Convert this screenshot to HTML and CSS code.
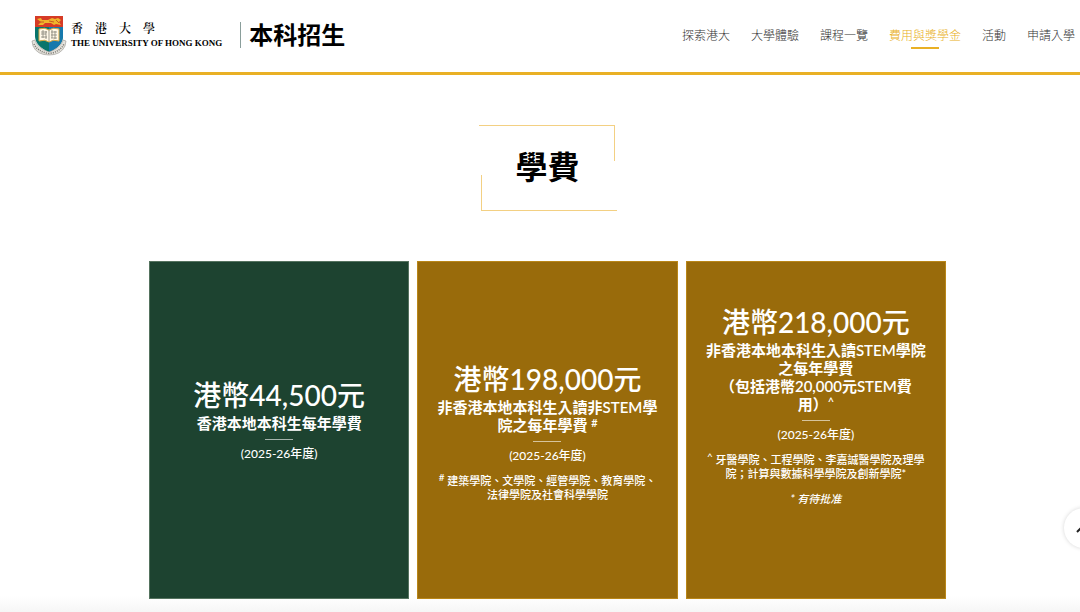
FILE: index.html
```html
<!DOCTYPE html>
<html lang="zh-Hant">
<head>
<meta charset="utf-8">
<meta name="viewport" content="width=device-width, initial-scale=1">
<title>學費 - 香港大學本科招生</title>
<link rel="stylesheet" href="styles.css">
</head>
<body>
<header class="site-header">
  <a class="brand" href="#">
    <svg class="crest" viewBox="0 0 36 42" aria-hidden="true">
      <path d="M4 2H32V22Q32 32 18 38Q4 32 4 22Z" fill="#08756c"/>
      <path d="M18 13H32V22Q32 32 18 38Z" fill="#1679ad"/>
      <path d="M4 2H32V13H4Z" fill="#d63b26"/>
      <path d="M6 5L10 4L11 6L17 6L21 4L24 5L27 4L30 6L28 8L30 11L25 10L23 11L20 9L14 9L12 11L7 11L10 8Z" fill="#efb52c"/>
      <path d="M8 8H13M18 7L23 8M25 6L28 9" stroke="#c85b20" stroke-width="1" fill="none"/>
      <path d="M8 15Q14 13 18 16Q22 13 28 15V27Q22 25 18 28Q14 25 8 27Z" fill="#fff8e8" stroke="#d8a640" stroke-width="1"/>
      <path d="M18 16V27M10 18H16M10 20H15M12 16V24M15 17V25M10 23H16M20 18H26M20 21H26M21 16V24M24 17V25M20 24H26" stroke="#77756c" stroke-width=".7" fill="none"/>
      <path d="M1 27L4 26Q6 34 18 38Q30 34 32 26L35 27L34 32Q30 41 18 41Q6 41 2 32Z" fill="#e4e2dc" stroke="#96948f" stroke-width=".6"/>
      <path d="M3 30Q7 38 18 39.500Q29 38 33 30" fill="none" stroke="#77746e" stroke-width="1.500" stroke-dasharray="1 1.2"/>
    </svg>
    <span class="wordmark">
      <span class="wordmark-zh"><span>香</span><span>港</span><span>大</span><span>學</span></span>
      <span class="wordmark-en">THE UNIVERSITY OF HONG KONG</span>
    </span>
    <span class="brand-section">本科招生</span>
  </a>
  <nav class="main-nav">
    <a href="#">探索港大</a>
    <a href="#">大學體驗</a>
    <a href="#">課程一覽</a>
    <a class="is-active" href="#" aria-current="page">費用與獎學金</a>
    <a href="#">活動</a>
    <a href="#">申請入學</a>
  </nav>
</header>

<main class="content">
  <div class="title-frame"><h1>學費</h1></div>
  <div class="cards">
    <section class="card card-local">
      <p class="amount">港幣44,500元</p>
      <h2>香港本地本科生每年學費</h2>
      <hr>
      <p class="year">(2025-26年度)</p>
    </section>
    <section class="card card-general">
      <p class="amount">港幣198,000元</p>
      <h2>非香港本地本科生入讀非STEM學<br>院之每年學費 <sup>#</sup></h2>
      <hr>
      <p class="year">(2025-26年度)</p>
      <p class="note"><sup>#</sup> 建築學院、文學院、經管學院、教育學院、<br>法律學院及社會科學學院</p>
    </section>
    <section class="card card-stem">
      <p class="amount">港幣218,000元</p>
      <h2>非香港本地本科生入讀STEM學院<br>之每年學費<br>（包括港幣20,000元STEM費<br>用）<sup>^</sup></h2>
      <hr>
      <p class="year">(2025-26年度)</p>
      <p class="note"><sup>^</sup> 牙醫學院、工程學院、李嘉誠醫學院及理學<br>院；計算與數據科學學院及創新學院*</p>
      <p class="note"><em>* 有待批准</em></p>
    </section>
  </div>
</main>
<button class="to-top" type="button" aria-label="返回頁首">
  <svg viewBox="0 0 16 10" aria-hidden="true"><path d="M1 9L8 2L15 9" fill="none" stroke="#222" stroke-width="2"/></svg>
</button>
</body>
</html>
```
FILE: styles.css
```css
* {
  box-sizing: border-box;
}

body {
  margin: 0;
  min-height: 100vh;
  background: linear-gradient(to top, #f6f6f6, #fff 16px);
  color: #000;
  font-family: Lato, "Noto Sans CJK TC", sans-serif;
}

a {
  color: inherit;
  text-decoration: none;
}

h1,
h2,
p {
  margin: 0;
}

.site-header {
  display: flex;
  align-items: center;
  justify-content: space-between;
  height: 75px;
  padding: 0 5px 2px 31px;
  border-bottom: 3px solid #e9b025;
  background: #fff;
}

.brand {
  display: flex;
  align-items: center;
}

.crest {
  width: 36px;
  height: 42px;
}

.wordmark {
  display: flex;
  flex-direction: column;
  margin-left: 4px;
  padding-right: 18px;
  white-space: nowrap;
}

.wordmark-zh {
  display: flex;
  gap: 12px;
  font: 600 12px/16px "Noto Serif CJK TC", "Noto Sans CJK TC", serif;
}

.wordmark-en {
  font: bold 9px/14px "Liberation Serif", serif;
}

.brand-section {
  padding-left: 8px;
  border-left: 1px solid #8a9e9b;
  font-size: 24px;
  font-weight: 700;
  line-height: 26px;
}

.main-nav {
  display: flex;
  gap: 21px;
  padding-top: 2px;
  color: #333;
  font-size: 12px;
  font-weight: 300;
  line-height: 18px;
  white-space: nowrap;
}

.main-nav .is-active {
  position: relative;
  color: #e9b025;
}

.is-active::after {
  content: "";
  position: absolute;
  top: 100%;
  left: 50%;
  width: 28px;
  height: 2px;
  margin: 2px 0 0 -14px;
  background: #e9b025;
}

.content {
  padding: 50px 134px 13px 149px;
}

.title-frame {
  position: relative;
  width: 138px;
  margin: 0 auto 50px;
  padding: 17px 0 20px;
}

.title-frame::before,
.title-frame::after {
  content: "";
  position: absolute;
  width: 135px;
  height: 35px;
  border: 0 solid #f3d083;
}

.title-frame::before {
  top: 0;
  left: 0;
  border-width: 1px 1px 0 0;
}

.title-frame::after {
  right: 0;
  bottom: 0;
  border-width: 0 0 1px 1px;
}

.title-frame h1 {
  font-size: 32px;
  line-height: 49px;
  text-align: center;
}

.cards {
  display: grid;
  grid-template-columns: repeat(3, 1fr);
  gap: 8px;
}

.card {
  min-height: 338px;
  padding: 0 8px 16px;
  border: 1px solid #b98618;
  background: #996b0b;
  color: #fff;
  font-size: 11px;
  font-weight: 500;
  line-height: 14px;
  text-align: center;
}

.card-local {
  padding-top: 117px;
  border-color: #55735f;
  background: #1d4330;
}

.card-general {
  padding-top: 101px;
}

.card-stem {
  padding-top: 44px;
}

.amount {
  font-size: 28px;
  font-weight: 500;
  line-height: 32px;
}

.card h2 {
  margin-top: 3px;
  font-size: 15px;
  font-weight: 600;
  line-height: 18px;
}

.card hr {
  width: 28px;
  height: 1px;
  margin: 7px auto;
  border: 0;
  background: #ffffff99;
}

.year {
  font-size: 12px;
}

.card sup {
  font-size: 11px;
  line-height: 0;
  vertical-align: 4px;
}

.card .note sup {
  font-size: 10px;
}

.note {
  margin-top: 11px;
}

.to-top {
  position: fixed;
  right: -24px;
  bottom: 64px;
  display: flex;
  align-items: center;
  justify-content: center;
  width: 40px;
  height: 40px;
  padding: 0;
  border: 0;
  border-radius: 50%;
  background: #fff;
  box-shadow: 0 0 4px #0000002b;
}

.to-top svg {
  width: 16px;
  height: 10px;
}
```
